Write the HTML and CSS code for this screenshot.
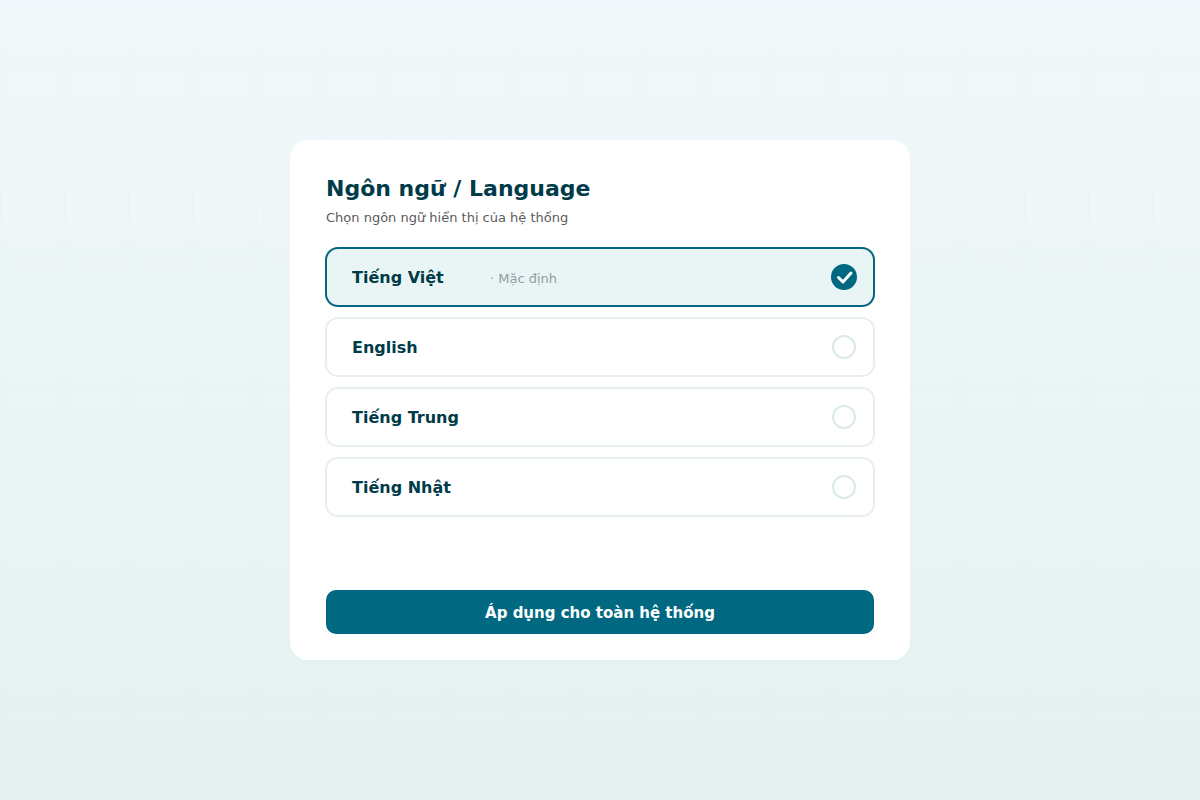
FILE: index.html
```html
<!DOCTYPE html>
<html lang="vi">
<head>
<meta charset="utf-8">
<meta name="viewport" content="width=device-width, initial-scale=1">
<title>Ngôn ngữ / Language</title>
<link rel="stylesheet" href="styles.css">
</head>
<body class="page">
<form class="card">
  <h1 class="title">Ngôn ngữ / Language</h1>
  <p class="subtitle">Chọn ngôn ngữ hiển thị của hệ thống</p>
  <div class="options" role="radiogroup" aria-label="Ngôn ngữ">
    <label class="option">
      <span class="name">Tiếng Việt</span>
      <span class="note">· Mặc định</span>
      <span class="mark">
        <input class="radio" type="radio" name="language" value="vi" checked>
        <svg class="tick" viewBox="0 0 26 26" aria-hidden="true"><path d="M7.5 13.5 L12 18 L20 9"/></svg>
      </span>
    </label>
    <label class="option">
      <span class="name">English</span>
      <span class="mark"><input class="radio" type="radio" name="language" value="en"></span>
    </label>
    <label class="option">
      <span class="name">Tiếng Trung</span>
      <span class="mark"><input class="radio" type="radio" name="language" value="zh"></span>
    </label>
    <label class="option">
      <span class="name">Tiếng Nhật</span>
      <span class="mark"><input class="radio" type="radio" name="language" value="ja"></span>
    </label>
  </div>
  <button class="apply" type="button">Áp dụng cho toàn hệ thống</button>
</form>
</body>
</html>
```
FILE: styles.css
```css
* { box-sizing: border-box; }

.page {
  margin: 0;
  min-height: 100vh;
  display: flex;
  align-items: center;
  justify-content: center;
  font-family: "DejaVu Sans", sans-serif;
  text-rendering: optimizeSpeed;
  color: #003b49;
  background:
    repeating-linear-gradient(90deg, rgba(0, 105, 128, 0.016) 0 1px, transparent 1px 63px, rgba(0, 105, 128, 0.016) 63px 64px),
    repeating-linear-gradient(180deg, rgba(0, 105, 128, 0.016) 0 1px, transparent 1px 63px, rgba(0, 105, 128, 0.016) 63px 64px),
    linear-gradient(180deg, #f1f8fb, #e4f1f0);
}

.card {
  display: flex;
  flex-direction: column;
  width: 100%;
  max-width: 620px;
  min-height: 520px;
  padding: 35px 35px 26px;
  border-radius: 18px;
  background: #fff;
}

.title {
  margin: 0 1px;
  font-size: 22px;
  line-height: 28px;
}

.subtitle {
  margin: 6px 1px 20px;
  font-size: 13px;
  line-height: 18px;
  color: #5b5b5b;
}

.options {
  display: grid;
  gap: 10px;
}

.option {
  display: grid;
  grid-template-columns: 138px 1fr 26px;
  align-items: center;
  height: 60px;
  padding: 0 16px 0 25px;
  border: 2px solid #e8eff2;
  border-radius: 13px;
  cursor: pointer;
}

.option:has(.radio:checked) {
  border-color: #006880;
  background: #e9f5f5;
}

.name {
  padding-top: 2px;
  font-size: 16px;
  line-height: 20px;
  font-weight: 700;
}

.note {
  padding-top: 4px;
  font-size: 13px;
  line-height: 18px;
  color: #8d9da3;
}

.mark {
  display: grid;
  grid-column: 3;
  place-items: center;
}

.radio {
  grid-area: 1 / 1;
  appearance: none;
  width: 24px;
  height: 24px;
  margin: 0;
  border: 2px solid #dce9ea;
  border-radius: 50%;
  background: #fff;
}

.radio:checked {
  width: 26px;
  height: 26px;
  border-color: #006880;
  background: #006880;
}

.tick {
  grid-area: 1 / 1;
  width: 26px;
  height: 26px;
  fill: none;
  stroke: #fff;
  stroke-width: 3;
  stroke-linecap: round;
  stroke-linejoin: round;
  pointer-events: none;
}

.apply {
  height: 44px;
  margin: auto 1px 0;
  padding: 2px 0 0;
  border: 0;
  border-radius: 10px;
  font: 700 15px/20px "DejaVu Sans", sans-serif;
  color: #fff;
  background: #006880;
  cursor: pointer;
}
```
